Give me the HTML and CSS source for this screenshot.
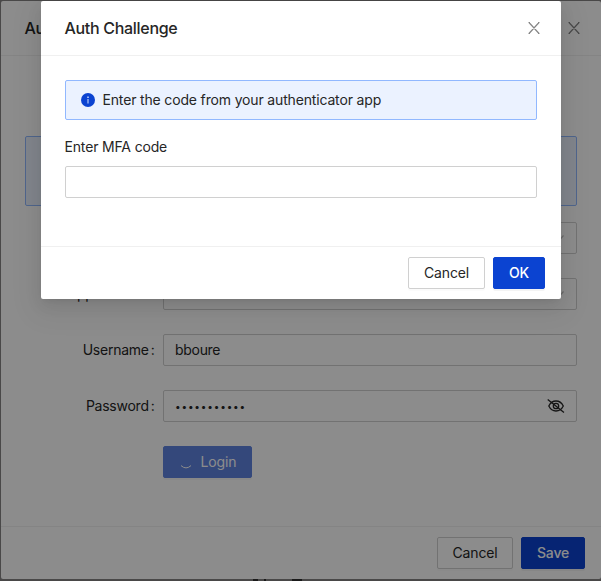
FILE: index.html
```html
<!DOCTYPE html>
<html lang="en">
<head>
<meta charset="utf-8">
<title>Auth Challenge</title>
<link rel="stylesheet" href="styles.css">
</head>
<body>
<main class="dialog">
  <header class="head">
    <h2 class="title">Au</h2>
    <svg class="close" viewBox="0 0 16 16"><path d="M3 2.500 13 13.500M13 2.500 3 13.500M2.500 2.500h1.500M12 2.500h1.500M2.500 13.500h1.500M12 13.500h1.500"/></svg>
  </header>
  <form class="form">
    <div class="notice"></div>
    <div class="row"><label class="label"></label><div class="field select"><svg class="chev" viewBox="0 0 12 12"><path d="m1.500 3.500 4.500 5 4.500-5"/></svg></div></div>
    <div class="row"><label class="label">App client ID<i>:</i></label><div class="field select"><svg class="chev" viewBox="0 0 12 12"><path d="m1.500 3.500 4.500 5 4.500-5"/></svg></div></div>
    <div class="row"><label class="label"><span>Username</span><i>:</i></label><div class="field"><span class="value">bboure</span></div></div>
    <div class="row"><label class="label"><span>Password</span><i>:</i></label><div class="field"><span class="dots">•••••••••••</span>
      <svg class="eye" viewBox="0 0 18 16"><path d="M1.800 8C3.500 4.600 6 3 9 3s5.600 1.600 7.300 5c-1.700 3.400-4.300 5-7.300 5S3.500 11.400 1.800 8Z"/><circle cx="9" cy="8" r="2.700"/><path d="M.7 1.400 17 14.400"/></svg></div></div>
    <div class="row"><span class="label"></span><button type="button" class="btn primary login"><svg class="spin" viewBox="0 0 14 14"><path d="M2 10.600Q7 15.200 12 10.600"/></svg><span>Login</span></button></div>
  </form>
  <footer class="foot">
    <button type="button" class="btn cancel-back"><span>Cancel</span></button>
    <button type="button" class="btn primary save"><span>Save</span></button>
  </footer>
</main>
<div class="behind"><b class="m1"></b><b class="m2"></b><b class="m3"></b></div>
<div class="mask">
  <section class="dialog modal">
    <header class="head">
      <h2 class="title">Auth Challenge</h2>
      <svg class="close" viewBox="0 0 16 16"><path d="M3 2.500 13 13.500M13 2.500 3 13.500M2.500 2.500h1.500M12 2.500h1.500M2.500 13.500h1.500M12 13.500h1.500"/></svg>
    </header>
    <div class="body">
      <div class="alert"><svg class="info" viewBox="0 0 14 14"><circle cx="7" cy="7" r="7"/><path d="M6.500 6h1v4.500h-1zM6.300 3.500h1.400v1.400H6.300z"/></svg><span>Enter the code from your authenticator app</span></div>
      <label class="code-label">Enter MFA code</label>
      <div class="field code"></div>
    </div>
    <footer class="foot">
      <button type="button" class="btn cancel"><span>Cancel</span></button>
      <button type="button" class="btn primary ok"><span>OK</span></button>
    </footer>
  </section>
</div>
</body>
</html>
```
FILE: styles.css
```css
* { box-sizing: border-box; }
body {
  margin: 0;
  height: 581px;
  padding: 1px 0 0 1px;
  overflow: hidden;
  background: #858384;
  color: #262626;
  font: 14px/22px Inter, "Liberation Sans", sans-serif;
  letter-spacing: -.16px;
}
.dialog { display: flex; flex-direction: column; background: #fff; border-radius: 2px; }
main.dialog { width: 600px; height: 578px; }
.head {
  flex: none;
  height: 55px;
  padding: 0 19px 0 23.5px;
  display: flex;
  align-items: center;
  justify-content: space-between;
  border-bottom: 1px solid #f0f0f0;
}
.title { margin: 0; font-size: 16px; line-height: 22px; font-weight: 500; letter-spacing: -.3px; }
.close { width: 16px; height: 16px; fill: none; stroke: #868686; stroke-width: 1.2; }
.form { flex: 1; display: flex; flex-direction: column; gap: 24px; padding: 80px 24px 0; }
.notice { flex: none; height: 70px; margin-bottom: -8px; border: 1px solid #91b8ff; background: #ebf2ff; border-radius: 2px; }
.row { display: flex; height: 32px; flex: none; }
.label { width: 138px; padding-right: 8.5px; display: flex; align-items: center; justify-content: flex-end; white-space: nowrap; letter-spacing: -.25px; }
.label i { font-style: normal; margin-left: 2px; }
.field {
  flex: 1;
  height: 32px;
  padding: 0 11px;
  display: flex;
  align-items: center;
  justify-content: space-between;
  background: #fff;
  border: 1px solid #d0d0d0;
  border-radius: 2px;
}
.select { justify-content: flex-end; }
.chev { width: 12px; height: 12px; fill: none; stroke: #bfbfbf; stroke-width: 1.2; }
.value { letter-spacing: -.3px; }
.dots { font-size: 10px; letter-spacing: .83px; }
.eye { width: 18px; height: 16px; fill: none; stroke: #262626; stroke-width: 1.3; }
.btn {
  height: 32px;
  padding: 0;
  border: 1px solid #d0d0d0;
  border-radius: 2px;
  background: #fff;
  color: #262626;
  font: inherit;
  letter-spacing: -.16px;
  display: flex;
  align-items: center;
  justify-content: center;
  box-shadow: 0 2px 0 rgba(0, 0, 0, .016);
}
.primary { background: #0b43d1; border-color: #0b43d1; color: #fff; font-weight: 500; box-shadow: 0 2px 0 rgba(0, 0, 0, .045); }
.login { width: 89px; gap: 8px; opacity: .65; font-weight: 400; }
.spin { width: 14px; height: 14px; fill: none; stroke: #fff; stroke-width: 1; }
.foot { flex: none; height: 53px; padding: 10px 16px; display: flex; justify-content: flex-end; gap: 8px; border-top: 1px solid #f0f0f0; }
.cancel-back { width: 76px; }
.save { width: 64px; }
.cancel { width: 77px; }
.ok { width: 52px; }
.behind { display: flex; height: 2px; padding-left: 252px; }
.behind b { height: 2px; background: #303030; }
.m1 { width: 5px; }
.m2 { width: 2px; margin-left: 6px; }
.m3 { width: 10px; margin-left: 26px; }
.mask {
  position: absolute;
  inset: 0;
  padding: 1px 40px 0 41px;
  background: rgba(0, 0, 0, .45);
}
.modal {
  width: 520px;
  height: 298px;
  box-shadow: 0 3px 6px -4px rgba(0, 0, 0, .12), 0 6px 16px rgba(0, 0, 0, .08), 0 9px 28px 8px rgba(0, 0, 0, .05);
}
.body { flex: 1; padding: 24px 24px 0 23.5px; display: flex; flex-direction: column; }
.alert { height: 40px; margin-left: .5px; padding: 0 15px; display: flex; align-items: center; gap: 7.5px; border: 1px solid #91b8ff; border-radius: 2px; background: #ebf2ff; }
.info { width: 14px; height: 14px; fill: #0b43d1; }
.info path { fill: #d7e3ff; }
.code-label { height: 46px; padding-top: 16px; }
.code { flex: none; margin-left: .5px; }
```
